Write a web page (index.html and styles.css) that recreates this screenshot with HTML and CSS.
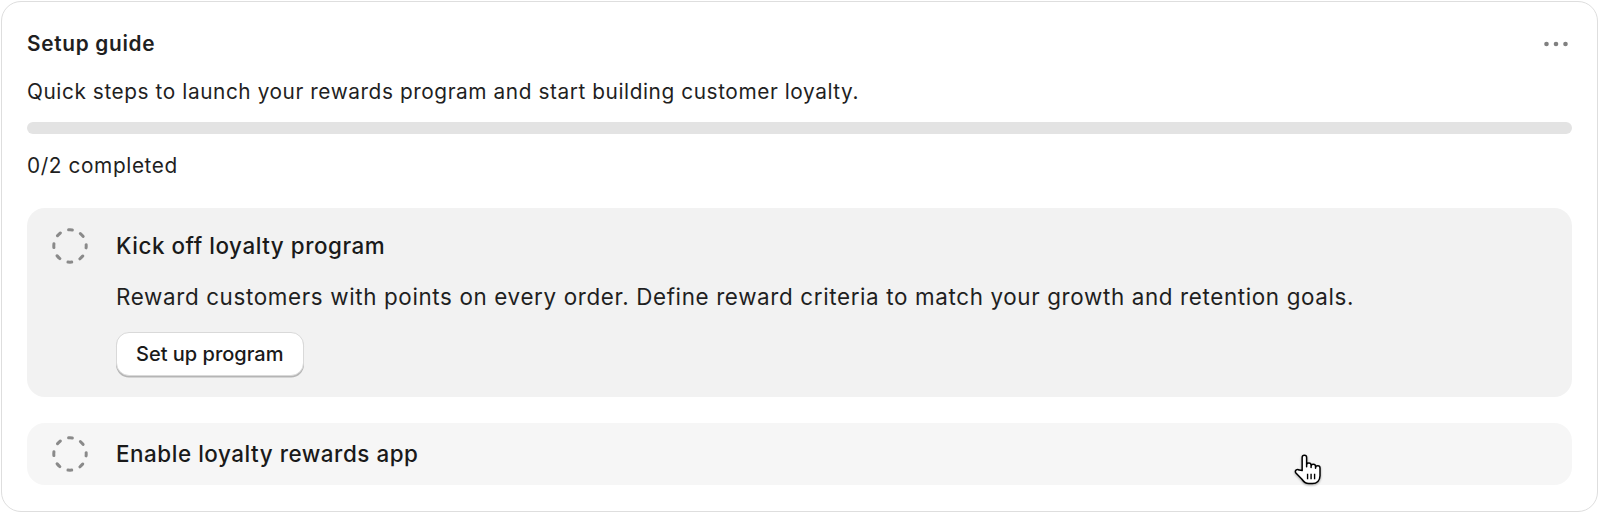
FILE: index.html
```html
<!DOCTYPE html>
<html lang="en">
<head>
<meta charset="utf-8">
<title>Setup guide</title>
<link rel="stylesheet" href="styles.css">
</head>
<body>
<div class="card">
  <div class="card-header">
    <h2 class="card-title">Setup guide</h2>
    <button class="more-btn" aria-label="More actions">
      <svg width="28" height="10" viewBox="0 0 28 10"><circle cx="4.5" cy="5" r="2.3" fill="#808080"/><circle cx="14" cy="5" r="2.3" fill="#808080"/><circle cx="23.5" cy="5" r="2.3" fill="#808080"/></svg>
    </button>
  </div>
  <p class="card-desc">Quick steps to launch your rewards program and start building customer loyalty.</p>
  <div class="progress"><div class="progress-fill" style="width:0%"></div></div>
  <p class="progress-label">0/2 completed</p>

  <div class="steps">
    <div class="step step-open">
      <div class="step-head">
        <svg class="step-icon" width="36" height="36" viewBox="0 0 36 36"><circle cx="18" cy="18" r="16.2" fill="none" stroke="#8a8a8a" stroke-width="3" stroke-linecap="round" stroke-dasharray="3.9 8.82" stroke-dashoffset="1.95"/></svg>
        <span class="step-title">Kick off loyalty program</span>
      </div>
      <div class="step-body">
        <p class="step-desc">Reward customers with points on every order. Define reward criteria to match your growth and retention goals.</p>
        <button class="btn">Set up program</button>
      </div>
    </div>
    <div class="step step-closed">
      <div class="step-head">
        <svg class="step-icon" width="36" height="36" viewBox="0 0 36 36"><circle cx="18" cy="18" r="16.2" fill="none" stroke="#8a8a8a" stroke-width="3" stroke-linecap="round" stroke-dasharray="3.9 8.82" stroke-dashoffset="1.95"/></svg>
        <span class="step-title">Enable loyalty rewards app</span>
      </div>
    </div>
  </div>

  <svg class="cursor" width="32" height="34" viewBox="0 0 30 32">
    <path d="M9.5 16.5 V4.2 a2.1 2.1 0 0 1 4.2 0 V13 V11.6 a2.1 2.1 0 0 1 4.2 0 V13.6 V12.6 a2.1 2.1 0 0 1 4.2 0 V14.4 V14 a2.1 2.1 0 0 1 4.2 0 V21.5 c0 4.3 -3 7.3 -7 7.3 h-3.6 c-3 0 -4.8 -1.6 -6.6 -4.3 L3.4 18.6 a2.1 2.1 0 0 1 3.3 -2.5 Z" fill="#fff" stroke="#000" stroke-width="1.4" stroke-linejoin="round"/>
    <path d="M14.6 19.5 v5.2 M17.9 19.5 v5.2 M21.2 19.5 v5.2" stroke="#000" stroke-width="1.3"/>
  </svg>
</div>
</body>
</html>
```

FILE: styles.css
```css
* {
  box-sizing: border-box;
}

html, body {
  margin: 0;
  padding: 0;
  background: #ffffff;
}

body {
  font-family: Inter, "Noto Sans", "Liberation Sans", sans-serif;
  color: #1f1f1f;
  height: 514px;
  overflow: hidden;
}

.card {
  position: relative;
  margin: 1px 2px 0 1px;
  height: 511px;
  border: 1px solid #dedede;
  border-radius: 20px;
  background: #fff;
  padding: 26px 25px 25px 25px;
}

.card-header {
  display: flex;
  align-items: center;
  justify-content: space-between;
  height: 32px;
}

.card-title {
  margin: 0;
  font-size: 20.8px;
  line-height: 32px;
  font-weight: 600;
  letter-spacing: 0.7px;
  color: #1f1f1f;
}

.more-btn {
  border: 0;
  background: transparent;
  padding: 0;
  margin-right: 2px;
  display: flex;
  align-items: center;
  cursor: pointer;
}

.card-desc {
  margin: 16px 0 0 0;
  font-size: 20.8px;
  line-height: 32px;
  letter-spacing: 0.58px;
  color: #1f1f1f;
}

.progress {
  margin-top: 14px;
  height: 12px;
  border-radius: 6px;
  background: #e3e3e3;
  overflow: hidden;
}

.progress-fill {
  height: 100%;
  background: #303030;
}

.progress-label {
  margin: 16px 0 0 0;
  font-size: 20.8px;
  line-height: 32px;
  letter-spacing: 0.6px;
  color: #1f1f1f;
}

.steps {
  margin-top: 26px;
  display: flex;
  flex-direction: column;
  gap: 26px;
}

.step {
  border-radius: 18px;
  padding: 0 25px;
}

.step-open {
  background: #f2f2f2;
  padding-top: 20px;
  padding-bottom: 21px;
}

.step-closed {
  background: #f6f6f6;
  padding-top: 13px;
  padding-bottom: 13px;
}

.step-head {
  display: flex;
  align-items: center;
  gap: 28px;
  height: 36px;
}

.step-icon {
  flex: none;
  display: block;
}

.step-title {
  font-size: 22.4px;
  line-height: 34px;
  font-weight: 500;
  letter-spacing: 0.55px;
  color: #1a1a1a;
}

.step-body {
  padding-left: 64px;
}

.step-desc {
  margin: 16px 0 0 0;
  font-size: 22.4px;
  line-height: 34px;
  letter-spacing: 0.64px;
  color: #1f1f1f;
}

.btn {
  margin-top: 18px;
  height: 44px;
  padding: 0 19px;
  font-family: inherit;
  font-size: 20px;
  font-weight: 500;
  color: #1a1a1a;
  background: #ffffff;
  border: 1px solid #d9d9d9;
  border-radius: 13px;
  box-shadow: 0 1.5px 0 #b5b5b5;
  cursor: pointer;
}

.cursor {
  position: absolute;
  left: 1290px;
  top: 451px;
  filter: drop-shadow(0 1px 1px rgba(0, 0, 0, 0.35));
  pointer-events: none;
}
```
